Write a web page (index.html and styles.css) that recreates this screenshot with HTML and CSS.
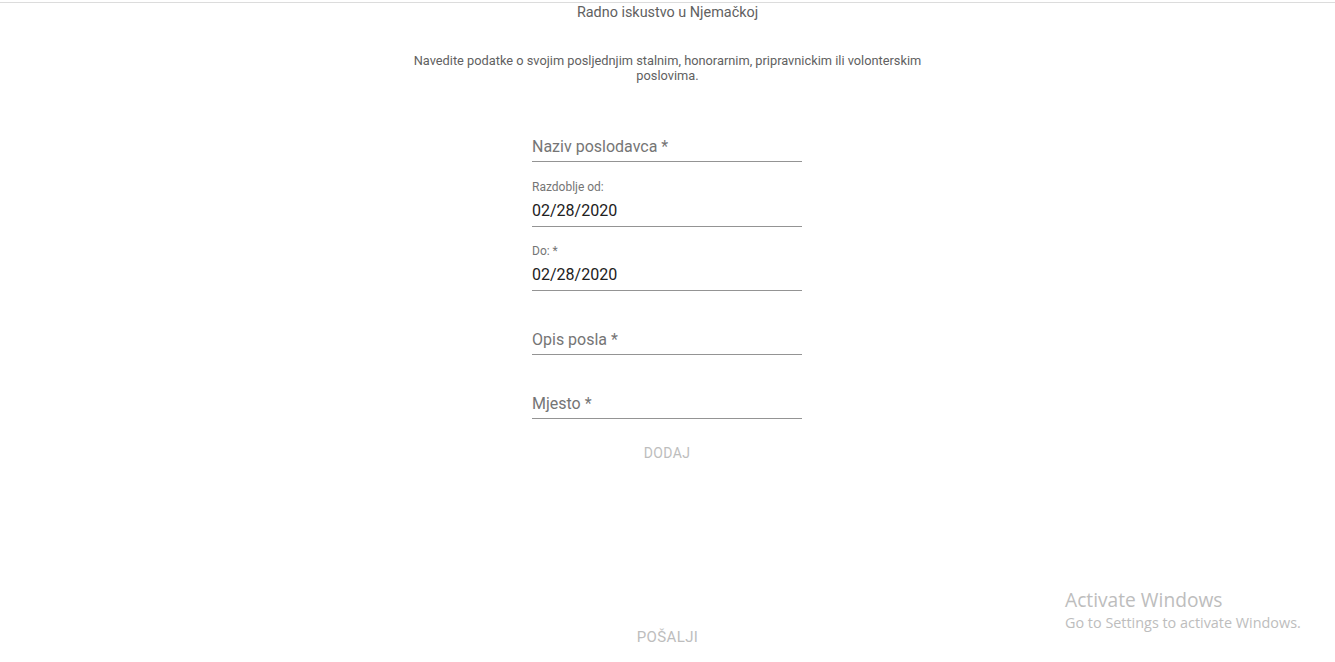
FILE: index.html
```html
<!DOCTYPE html>
<html lang="hr">
<head>
<meta charset="utf-8">
<title>Radno iskustvo u Njemačkoj</title>
<link rel="stylesheet" href="styles.css">
</head>
<body>
<div class="page">
  <h2 class="title">Radno iskustvo u Njemačkoj</h2>
  <p class="desc">Navedite podatke o svojim posljednjim stalnim, honorarnim, pripravnickim ili volonterskim poslovima.</p>
  <form class="form">
    <div class="field">
      <div class="input empty"><span class="placeholder">Naziv poslodavca *</span></div>
    </div>
    <div class="field filled first-filled">
      <label class="small-label">Razdoblje od:</label>
      <div class="input"><span class="value">02/28/2020</span></div>
    </div>
    <div class="field filled">
      <label class="small-label">Do: *</label>
      <div class="input"><span class="value">02/28/2020</span></div>
    </div>
    <div class="field">
      <div class="input empty"><span class="placeholder">Opis posla *</span></div>
    </div>
    <div class="field">
      <div class="input empty"><span class="placeholder">Mjesto *</span></div>
    </div>
    <button type="button" class="btn" disabled>Dodaj</button>
  </form>
  <button type="button" class="btn submit" disabled>Pošalji</button>
</div>
<div class="watermark">
  <div class="wm-title">Activate Windows</div>
  <div class="wm-sub">Go to Settings to activate Windows.</div>
</div>
</body>
</html>
```

FILE: styles.css
```css
html, body {
  margin: 0;
  padding: 0;
  background: #fff;
}
body {
  font-family: Roboto, "Liberation Sans", sans-serif;
  overflow: hidden;
  height: 662px;
}
.page {
  margin-top: 2px;
  border-top: 1px solid #dcdcdc;
  display: flex;
  flex-direction: column;
  align-items: center;
}
.title {
  margin: 1px 0 0;
  font-size: 14.4px;
  font-weight: 400;
  line-height: 18px;
  color: #616161;
}
.desc {
  margin: 31px 0 0;
  width: 540px;
  text-align: center;
  font-size: 12.8px;
  line-height: 15px;
  color: #616161;
}
.form {
  margin-top: 31px;
  margin-right: 1px;
  width: 270px;
  display: flex;
  flex-direction: column;
  gap: 16px;
}
.field {
  display: flex;
  flex-direction: column;
  padding-top: 16px;
}
.field.filled {
  padding-top: 0;
}
.field.first-filled {
  margin-top: 1px;
}
.small-label {
  height: 16px;
  font-size: 12px;
  line-height: 16px;
  color: #757575;
}
.input {
  height: 32px;
  padding-top: 6px;
  box-sizing: border-box;
  border-bottom: 1px solid #949494;
  font-size: 16px;
  line-height: 19px;
}
.input.empty {
  padding-top: 7px;
}
.placeholder {
  color: #757575;
}
.value {
  color: #212121;
}
.btn {
  align-self: center;
  background: none;
  border: none;
  height: 36px;
  padding: 6px 8px;
  font-family: Roboto, "Liberation Sans", sans-serif;
  font-size: 14px;
  line-height: 24px;
  letter-spacing: 0.4px;
  text-transform: uppercase;
  color: #bdbdbd;
  cursor: default;
  margin-top: 0;
}
.submit {
  margin-top: 148px;
  font-size: 15px;
}
.watermark {
  position: absolute;
  left: 1065px;
  top: 588px;
  color: #bdbdbd;
  font-family: "Open Sans", "Noto Sans", sans-serif;
}
.wm-title {
  font-size: 19.2px;
  line-height: 24px;
}
.wm-sub {
  font-size: 14.4px;
  line-height: 22px;
}
```
